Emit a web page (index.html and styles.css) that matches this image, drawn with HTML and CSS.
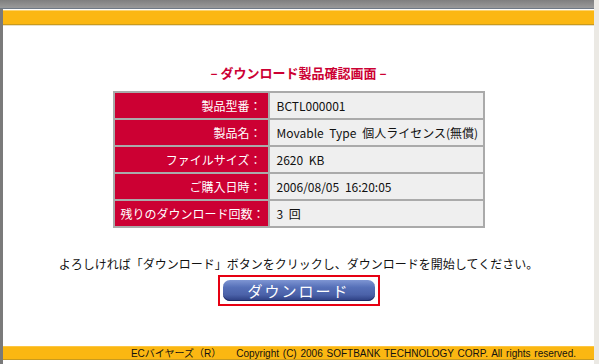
FILE: index.html
```html
<!DOCTYPE html>
<html lang="ja">
<head>
    <meta charset="UTF-8">
    <title>ダウンロード製品確認画面</title>
    <link rel="stylesheet" href="styles.css">
</head>
<body>

<div class="frame">
    <div class="topbar"></div>
    <div class="band"></div>

    <div class="content">
        <h1 class="title">&ndash; ダウンロード製品確認画面 &ndash;</h1>

        <table class="info">
            <tr><th>製品型番：</th><td>BCTL000001</td></tr>
            <tr><th>製品名：</th><td>Movable Type 個人ライセンス(無償)</td></tr>
            <tr><th>ファイルサイズ：</th><td>2620 KB</td></tr>
            <tr><th>ご購入日時：</th><td>2006/08/05 16:20:05</td></tr>
            <tr><th>残りのダウンロード回数：</th><td>3 回</td></tr>
        </table>

        <p class="note">よろしければ「ダウンロード」ボタンをクリックし、ダウンロードを開始してください。</p>

        <div class="btn-box">
            <a href="#" class="btn">ダウンロード</a>
        </div>
    </div>

    <div class="footer">ECバイヤーズ（R）　　Copyright (C) 2006 SOFTBANK TECHNOLOGY CORP. All rights reserved.</div>
</div>

</body>
</html>
```

FILE: styles.css
```css
body {
    margin: 0;
    font-family: "Noto Sans CJK JP", sans-serif;
    background-color: #fff;
}
.frame {
    height: 364px;
    border-left: 3px solid #7a7a7a;
    border-right: 5px solid #ebe9e4;
    box-sizing: border-box;
    display: flex;
    flex-direction: column;
}
.topbar {
    height: 8px;
    margin-left: -3px;
    background: linear-gradient(#7f7f7f, #9a9a9a);
    border-bottom: 1px solid #6f7986;
}
.band {
    height: 13px;
    margin-top: 1px;
    background-color: #fbb712;
    border-top: 1px solid #fdd36a;
    border-bottom: 1px solid #c99a1e;
    box-shadow: 0 1px 0 #e8e0c8;
}
.content {
    flex: 1;
    display: flex;
    flex-direction: column;
    align-items: center;
}
.title {
    margin: 39px 0 0;
    font-size: 13px;
    line-height: 18px;
    font-weight: bold;
    color: #cc0033;
}
.info {
    margin-top: 9px;
    width: 372px;
    table-layout: fixed;
    border-collapse: collapse;
    border: 2px solid #aaa;
    font-size: 12px;
}
.info th,
.info td {
    height: 25px;
    padding: 0 7px;
    border: 2px solid #aaa;
    font-weight: normal;
    white-space: nowrap;
    overflow: hidden;
}
.info th {
    width: 141px;
    padding: 0 6px;
    text-align: right;
    color: #fff;
    background-color: #cc0033;
}
.info td {
    color: #111;
    background-color: #efefef;
    word-spacing: 3px;
}
.note {
    margin: 28px 0 0;
    font-size: 12px;
    line-height: 16px;
    color: #111;
}
.btn-box {
    margin-top: 3px;
    padding: 3px;
    border: 2px solid #e60012;
}
.btn {
    display: block;
    width: 152px;
    height: 21px;
    line-height: 21px;
    border-radius: 7px;
    background: linear-gradient(#7e95d3 0%, #5670b8 35%, #4b62a9 70%, #2b3d80 100%);
    box-shadow: inset 0 -1px 0 #1c2a66;
    color: #fff;
    font-size: 15px;
    text-align: center;
    text-decoration: none;
    letter-spacing: 2px;
}
.footer {
    height: 12px;
    margin-bottom: 4px;
    padding-right: 18px;
    background-color: #fbb712;
    border-top: 1px solid #fdc640;
    border-bottom: 1px solid #c99a1e;
    font-family: "Liberation Sans", "Noto Sans CJK JP", sans-serif;
    font-size: 10px;
    line-height: 13px;
    text-align: right;
    color: #111;
    word-spacing: 1px;
}
```
